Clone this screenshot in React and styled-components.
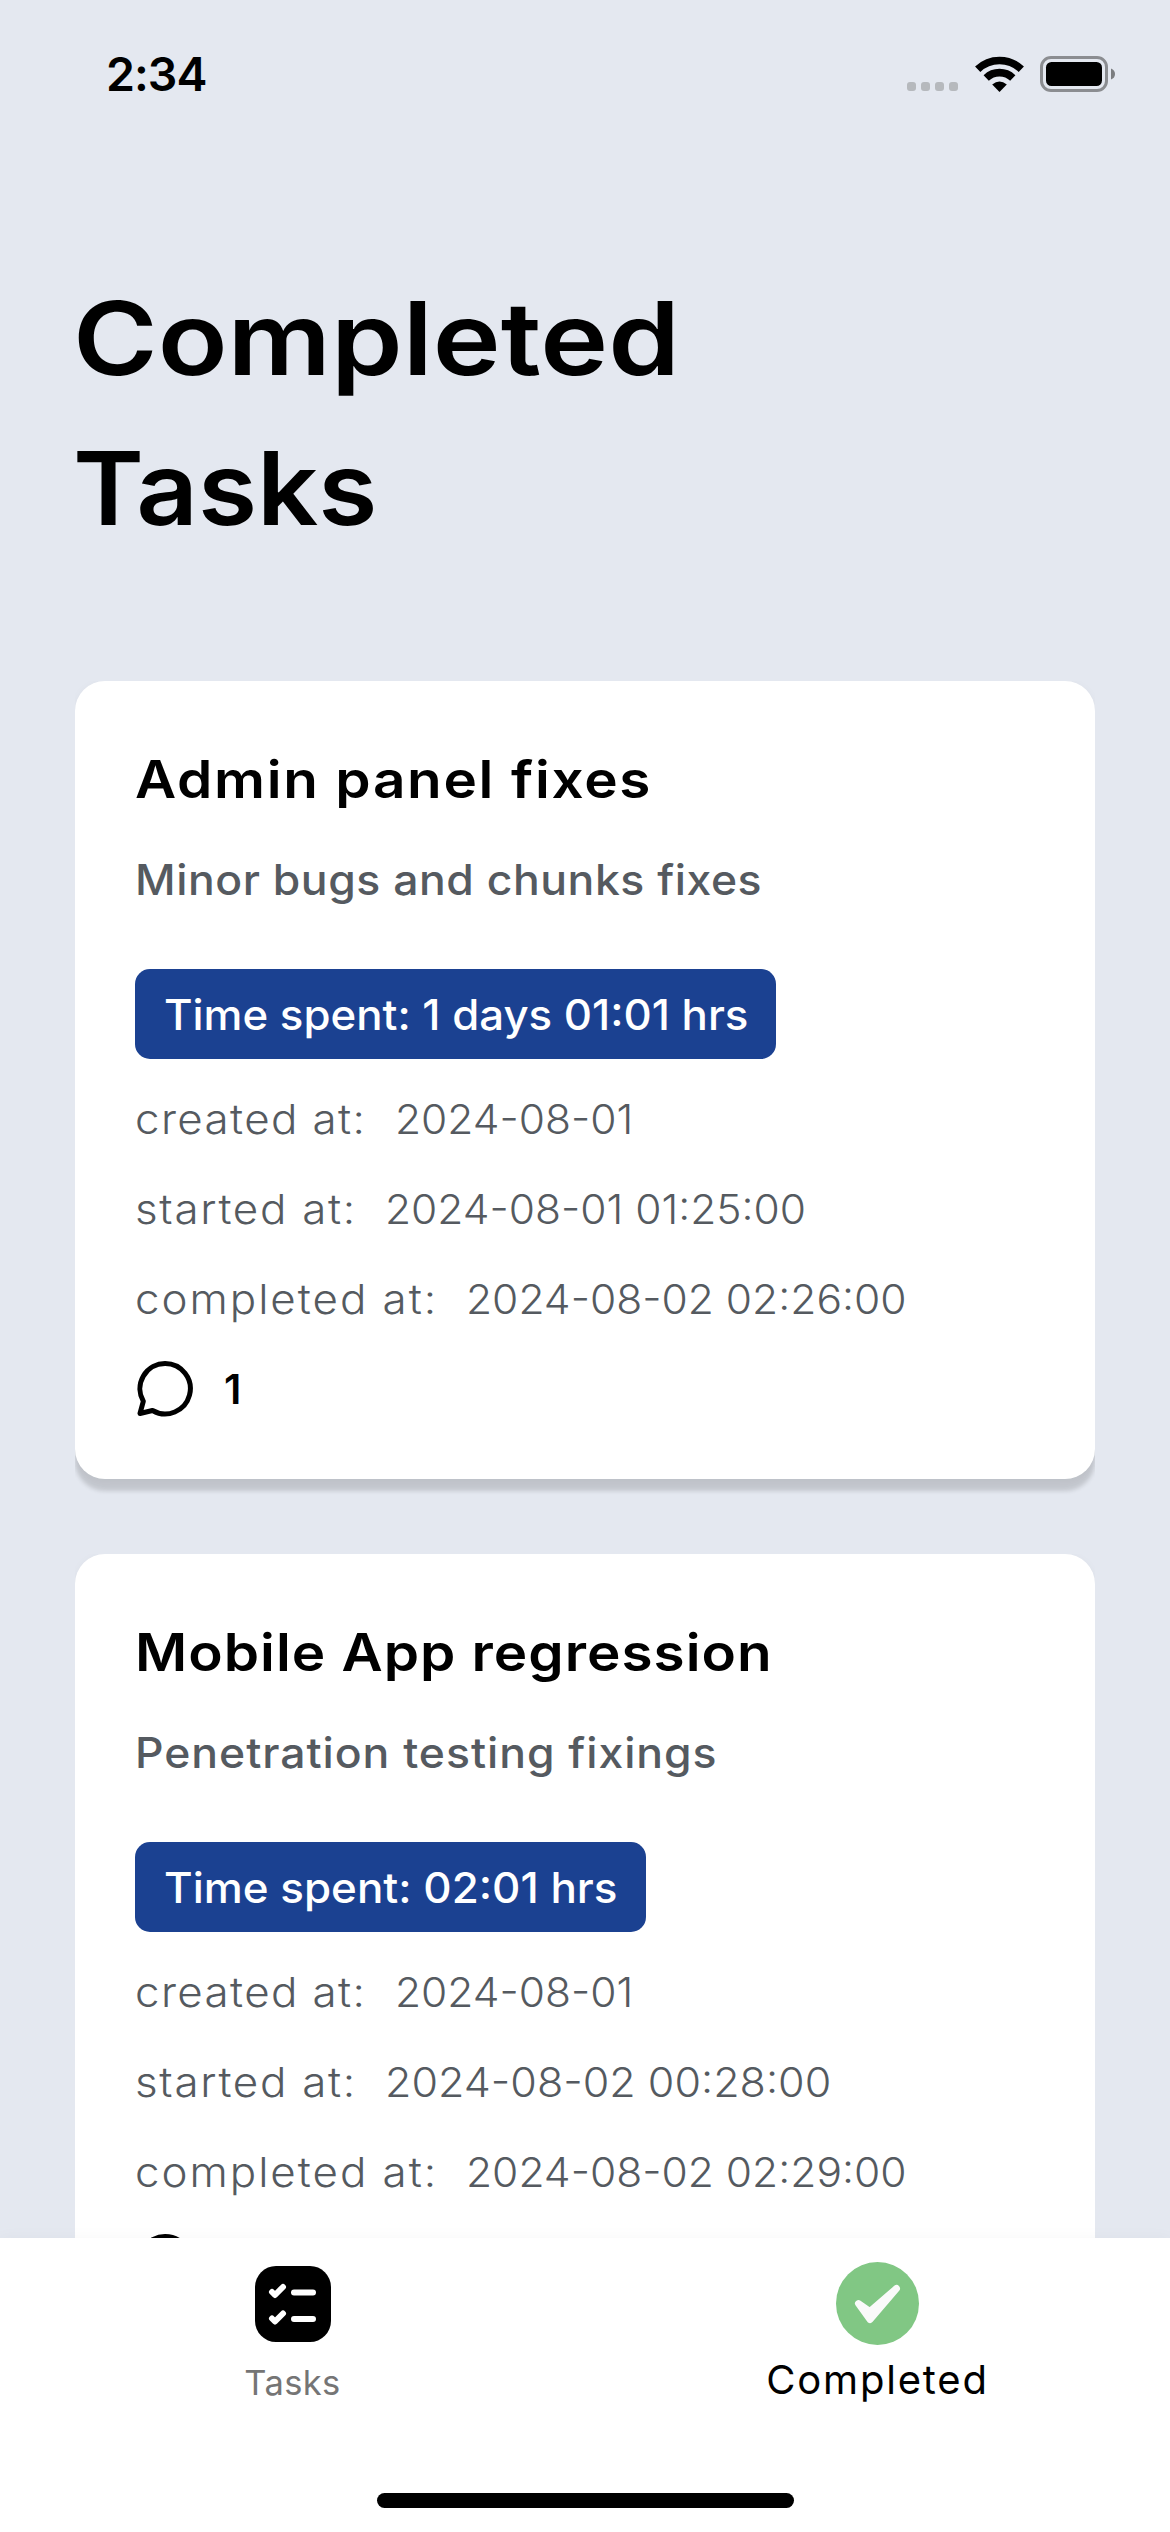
import React from "react";
import styled, { createGlobalStyle } from "styled-components";

const GlobalStyle = createGlobalStyle`
  *, *::before, *::after { box-sizing: border-box; }
  body { margin: 0; background: #e4e8f0; }
  h1, h2, p { margin: 0; font-weight: inherit; }
`;

const Screen = styled.div`
  width: 1170px;
  height: 2532px;
  display: flex;
  flex-direction: column;
  overflow: hidden;
  background: #e4e8f0;
  color: #000;
  font-family: Inter, "Liberation Sans", sans-serif;
  white-space: nowrap;
`;

/* Widens the letterforms from the left edge; tracking fine-tunes the run. */
const Wide = styled.span`
  display: inline-block;
  transform: scaleX(${(p) => p.$stretch || 1});
  transform-origin: left center;
  letter-spacing: ${(p) => p.$tracking || "0"};
`;

const StatusBar = styled.header`
  flex: none;
  height: 141px;
  padding: 7px 54px 0 106px;
  display: flex;
  align-items: flex-start;
  justify-content: space-between;
`;

const Clock = styled.span`
  margin-top: 38px;
  font-size: 46.5px;
  line-height: 58px;
  font-weight: 600;
  letter-spacing: -1px;
`;

const StatusIcons = styled.div`
  height: 36px;
  margin-top: 49px;
  display: flex;
  align-items: flex-end;
`;

const SignalDots = styled.div`
  display: flex;
  gap: 5px;
  margin: 0 17px 1px 0;
`;

const Dot = styled.i`
  width: 9px;
  height: 9px;
  border-radius: 3px;
  background: #b6b9bd;
`;

const WifiIcon = styled.svg`
  width: 49px;
  height: 36px;
  margin-right: 16px;
`;

const BatteryIcon = styled.svg`
  width: 76px;
  height: 36px;
`;

const Content = styled.main`
  flex: 1;
  min-height: 0;
  overflow: hidden;
  padding: 122px 75px 0;
`;

const PageTitle = styled.h1`
  display: flex;
  flex-direction: column;
  align-items: flex-start;
  margin-left: -2px;
  font-size: 101.5px;
  line-height: 150px;
  font-weight: 560;
`;

const CardList = styled.div`
  margin-top: 118px;
  display: flex;
  flex-direction: column;
  gap: 75px;
`;

const Card = styled.article`
  height: 798px;
  padding: 60px;
  border-radius: 30px;
  background: #fff;
  box-shadow: 0 12px 4px rgba(0, 0, 0, 0.14), 0 2px 10px rgba(0, 0, 0, 0.04);
  clip-path: inset(0 0 -40px 0);
`;

const CardTitle = styled.h2`
  font-size: 51.5px;
  line-height: 76px;
  height: 75px;
  font-weight: 560;
`;

const Description = styled.p`
  margin: 32px 0 58px;
  font-size: 42px;
  line-height: 63px;
  font-weight: 470;
  color: #555a60;
`;

const Badge = styled.div`
  width: ${(p) => p.$width};
  height: 90px;
  padding-left: 29px;
  border-radius: 15px;
  background: #1b4191;
  color: #fff;
  font-size: 42px;
  line-height: 91px;
  font-weight: 470;
`;

const MetaList = styled.div`
  margin-top: 15px;
`;

const MetaRow = styled.div`
  height: 90px;
  display: flex;
  align-items: center;
  font-size: 41px;
  font-weight: 300;
  color: #555a60;
`;

const MetaLabel = styled.div`
  width: ${(p) => p.$width};
`;

const Comments = styled.div`
  height: 90px;
  display: flex;
  align-items: center;
  gap: 29px;
  font-size: 41px;
  font-weight: 560;
`;

const BubbleIcon = styled.svg`
  width: 60px;
  height: 60px;
`;

const TabBar = styled.nav`
  flex: none;
  height: 294px;
  display: grid;
  grid-template-columns: 1fr 1fr;
  grid-template-rows: 255px 15px;
  background: #fff;
  box-shadow: 0 -1px 14px rgba(0, 0, 0, 0.03);
  z-index: 1;
`;

const Tab = styled.div`
  display: flex;
  flex-direction: column;
  align-items: center;
  padding-top: ${(p) => p.$top};
`;

const TabIcon = styled.svg`
  width: ${(p) => p.$size};
  height: ${(p) => p.$size};
  flex: none;
`;

const TabLabel = styled.span`
  margin-top: ${(p) => p.$gap};
  font-size: ${(p) => p.$size};
  line-height: 48px;
  font-weight: 400;
  color: ${(p) => p.$color};
  letter-spacing: ${(p) => p.$tracking};
`;

const HomeIndicator = styled.div`
  grid-column: 1 / -1;
  justify-self: center;
  width: 417px;
  height: 15px;
  border-radius: 8px;
  background: #000;
`;

const tasks = [
  {
    title: { text: "Admin panel fixes", stretch: 1.1, tracking: "1.5px" },
    description: { text: "Minor bugs and chunks fixes", stretch: 1.06, tracking: "0.5px" },
    badge: { text: "Time spent: 1 days 01:01 hrs", stretch: 1.042, width: "641px" },
    meta: [
      { label: "created at:", tracking: "1.3px", width: "260px", value: "2024-08-01", stretch: 1.037 },
      { label: "started at:", tracking: "1.6px", width: "250px", value: "2024-08-01 01:25:00", stretch: 1.037 },
      { label: "completed at:", tracking: "1.85px", width: "331px", value: "2024-08-02 02:26:00", stretch: 1.038 },
    ],
  },
  {
    title: { text: "Mobile App regression", stretch: 1.1, tracking: "0.9px" },
    description: { text: "Penetration testing fixings", stretch: 1.06, tracking: "0.9px" },
    badge: { text: "Time spent: 02:01 hrs", stretch: 1.046, width: "511px" },
    meta: [
      { label: "created at:", tracking: "1.3px", width: "260px", value: "2024-08-01", stretch: 1.037 },
      { label: "started at:", tracking: "1.6px", width: "250px", value: "2024-08-02 00:28:00", stretch: 1.05 },
      { label: "completed at:", tracking: "1.85px", width: "331px", value: "2024-08-02 02:29:00", stretch: 1.038 },
    ],
  },
];

function TaskCard({ task }) {
  const { title, description, badge, meta } = task;
  return (
    <Card>
      <CardTitle>
        <Wide $stretch={title.stretch} $tracking={title.tracking}>{title.text}</Wide>
      </CardTitle>
      <Description>
        <Wide $stretch={description.stretch} $tracking={description.tracking}>{description.text}</Wide>
      </Description>
      <Badge $width={badge.width}>
        <Wide $stretch={badge.stretch}>{badge.text}</Wide>
      </Badge>
      <MetaList>
        {meta.map((row) => (
          <MetaRow key={row.label}>
            <MetaLabel $width={row.width}>
              <Wide $stretch={1.07} $tracking={row.tracking}>{row.label}</Wide>
            </MetaLabel>
            <Wide $stretch={row.stretch}>{row.value}</Wide>
          </MetaRow>
        ))}
      </MetaList>
      <Comments>
        <BubbleIcon viewBox="0 0 60 60" fill="none" stroke="#000" strokeWidth="5" strokeLinejoin="round">
          <path d="M30 4.500A25.200 25.200 0 1 1 17.500 51.500L5 54.500L8.300 42.300A25.200 25.200 0 0 1 30 4.500Z" />
        </BubbleIcon>
        <span>1</span>
      </Comments>
    </Card>
  );
}

export default function App() {
  return (
    <Screen>
      <GlobalStyle />
      <StatusBar>
        <Clock>2:34</Clock>
        <StatusIcons>
          <SignalDots><Dot /><Dot /><Dot /><Dot /></SignalDots>
          <WifiIcon viewBox="0 0 49 36">
            <g fill="none" stroke="#000" strokeWidth="7.6">
              <path d="M2.700 13.200A31.500 31.500 0 0 1 46.300 13.200" />
              <path d="M11.200 21.900A19.300 19.300 0 0 1 37.800 21.900" />
            </g>
            <path d="M24.500 36 17.200 28.500Q24.500 22.300 31.800 28.500Z" />
          </WifiIcon>
          <BatteryIcon viewBox="0 0 76 36">
            <rect x="1.500" y="1.500" width="65" height="33" rx="9.500" fill="none" stroke="#8b8d91" strokeWidth="3" />
            <rect x="6" y="6" width="56" height="24" rx="5.500" />
            <path d="M71 12.500Q75 14 75 18T71 23.500Z" fill="#7b7d80" />
          </BatteryIcon>
        </StatusIcons>
      </StatusBar>
      <Content>
        <PageTitle>
          <Wide $stretch={1.132}>Completed</Wide>
          <Wide $stretch={1.06}>Tasks</Wide>
        </PageTitle>
        <CardList>
          {tasks.map((task) => <TaskCard key={task.title.text} task={task} />)}
        </CardList>
      </Content>
      <TabBar>
        <Tab $top="28px">
          <TabIcon $size="76px" viewBox="0 0 76 76">
            <rect width="76" height="76" rx="21" />
            <g fill="none" stroke="#fff" strokeWidth="6" strokeLinecap="round" strokeLinejoin="round">
              <path d="M17 26l3 3 8-8M17 52.500l3 3 8-8M39 26.500h19M39 53h19" />
            </g>
          </TabIcon>
          <TabLabel $gap="17px" $size="34.5px" $color="#757575" $tracking="0.4px">Tasks</TabLabel>
        </Tab>
        <Tab $top="24px">
          <TabIcon $size="83px" viewBox="0 0 83 83">
            <circle cx="41.500" cy="41.500" r="41.500" fill="#81c784" />
            <path d="M22.500 41.500 34 49.500 60.500 26.500 34 57.500Z" fill="#fafafa" stroke="#fafafa" strokeWidth="7" strokeLinejoin="round" />
          </TabIcon>
          <TabLabel $gap="11px" $size="40px" $color="#000" $tracking="1.8px">Completed</TabLabel>
        </Tab>
        <HomeIndicator />
      </TabBar>
    </Screen>
  );
}
